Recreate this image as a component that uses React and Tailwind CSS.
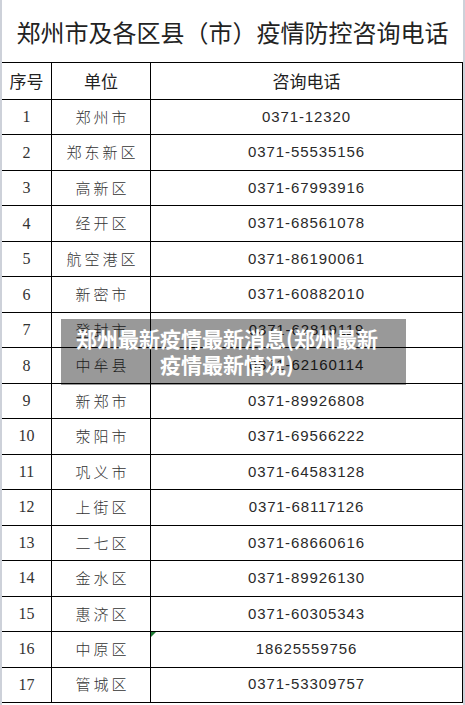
const rows = [
    ['1', '郑州市', '0371-12320'],
    ['2', '郑东新区', '0371-55535156'],
    ['3', '高新区', '0371-67993916'],
    ['4', '经开区', '0371-68561078'],
    ['5', '航空港区', '0371-86190061'],
    ['6', '新密市', '0371-60882010'],
    ['7', '登封市', '0371-62819119'],
    ['8', '中牟县', '0371-62160114'],
    ['9', '新郑市', '0371-89926808'],
    ['10', '荥阳市', '0371-69566222'],
    ['11', '巩义市', '0371-64583128'],
    ['12', '上街区', '0371-68117126'],
    ['13', '二七区', '0371-68660616'],
    ['14', '金水区', '0371-89926130'],
    ['15', '惠济区', '0371-60305343'],
    ['16', '中原区', '18625559756'],
    ['17', '管城区', '0371-53309757'],
];

const cjk = { fontFamily: '"Noto Sans CJK SC", sans-serif' };

export default function App() {
    return (
        <div className="relative w-[465px] h-[705px] bg-white border-x-2 border-[#cdd1d9] overflow-hidden" style={cjk}>
            {/* 标题 */}
            <div className="h-[62px] flex items-center justify-center pt-[2px] text-[24px] text-[#222]">
                郑州市及各区县（市）疫情防控咨询电话
            </div>

            <div className="border-t border-black border-r flex flex-col h-[641px]">
                {/* 表头 */}
                <div className="grid grid-cols-[50px_99px_1fr] h-[37px] shrink-0 border-b border-black text-[17px] text-[#222]">
                    <div className="flex items-center justify-center border-r border-black">序号</div>
                    <div className="flex items-center justify-center border-r border-black">单位</div>
                    <div className="flex items-center justify-center">咨询电话</div>
                </div>

                {rows.map(([no, name, phone]) => (
                    <div key={no} className="relative grid grid-cols-[50px_99px_1fr] flex-1 border-b border-black">
                        <div
                            className="flex items-center justify-center border-r border-black text-[16px] text-[#333]"
                            style={{ fontFamily: '"Liberation Serif", serif' }}
                        >
                            {no}
                        </div>
                        <div className="flex items-center justify-center border-r border-black text-[15px] font-light text-[#333] tracking-[3px] pl-[3px]">
                            {name}
                        </div>
                        <div
                            className="flex items-center justify-center text-[15px] text-[#2a2a2a] tracking-[0.9px]"
                            style={{ fontFamily: '"Liberation Sans", sans-serif' }}
                        >
                            {phone}
                        </div>
                        {no === '16' && (
                            <div className="absolute left-[149px] top-0 w-0 h-0 border-t-[5px] border-t-[#1e7b34] border-r-[5px] border-r-transparent" />
                        )}
                    </div>
                ))}
            </div>

            {/* 水印标题 */}
            <div className="absolute left-[59px] top-[319px] w-[345px] h-[66px] bg-black/40 pl-[9px] pr-[22px] flex items-center justify-center">
                <p className="text-white font-bold text-[21px] leading-[26px] text-center -mt-[2px]">
                    郑州最新疫情最新消息(郑州最新疫情最新情况)
                </p>
            </div>
        </div>
    );
}
